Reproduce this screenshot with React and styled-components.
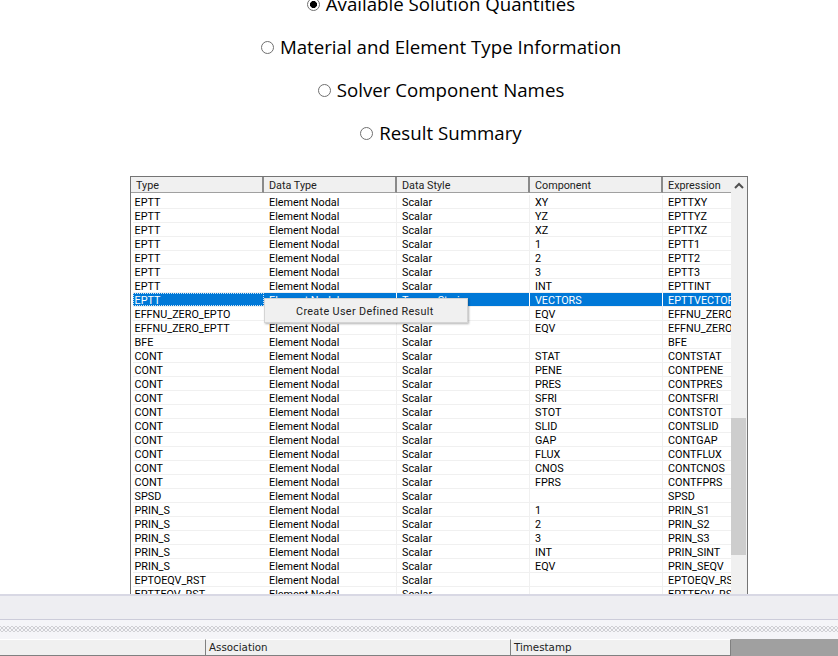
import React from "react";
import styled, { createGlobalStyle } from "styled-components";

const GlobalStyle = createGlobalStyle`
  html, body {
    margin: 0;
    padding: 0;
    background: #ffffff;
  }
`;

const Page = styled.div`
  width: 838px;
  height: 656px;
  overflow: hidden;
  display: flex;
  flex-direction: column;
`;

const Options = styled.div`
  flex: none;
  height: 176px;
  padding-left: 44px;
  box-sizing: border-box;
`;

const OptionList = styled.div`
  margin-top: -18px;
  display: flex;
  flex-direction: column;
  align-items: center;
`;

const Option = styled.label`
  height: 43px;
  display: flex;
  align-items: center;
  gap: 6px;
  font-family: "Open Sans", sans-serif;
  font-size: 18.7px;
  color: #000;
`;

const Radio = styled.input`
  appearance: none;
  margin: 2px 0 0;
  width: 13px;
  height: 13px;
  box-sizing: border-box;
  border: 1px solid #707070;
  border-radius: 50%;
  background: radial-gradient(circle, ${(p) => (p.defaultChecked ? "#000 3.2px" : "#fff 3.2px")}, #fff 3.8px);
`;

const TableFrame = styled.div`
  flex: none;
  position: relative;
  width: 618px;
  height: 418px;
  margin-left: 130px;
  box-sizing: border-box;
  border: 1px solid #747474;
  border-bottom: none;
  display: flex;
  overflow: hidden;
  font-family: "Roboto", sans-serif;
  font-size: 10.8px;
  color: #000;
`;

const TableBody = styled.div`
  width: 600px;
  flex: none;
  overflow: hidden;
`;

const HeadRow = styled.div`
  display: grid;
  grid-template-columns: 133px 133px 133px 133px 68px;
  height: 16px;
  margin-bottom: 2px;
`;

const HeadCell = styled.div`
  background: #f0f0f0;
  border-right: 2px solid #8a8a8a;
  border-bottom: 1px solid #a0a0a0;
  box-sizing: border-box;
  padding: 1px 0 0 5px;
  line-height: 15px;
  white-space: nowrap;
  overflow: hidden;
  color: #222;
  &:last-child {
    border-right: none;
  }
`;

const Row = styled.div`
  display: grid;
  grid-template-columns: 131px 133px 133px 133px 68px;
  margin-left: 2px;
  height: 14px;
  box-sizing: border-box;
  border-bottom: 1px solid #f0f0f0;
  background: ${(p) => (p.$selected ? "#0078d7" : "#fff")};
  color: ${(p) => (p.$selected ? "#fff" : "#000")};
`;

const Cell = styled.div`
  padding: 1px 0 0 5px;
  line-height: 13px;
  height: 13px;
  white-space: nowrap;
  overflow: hidden;
  box-sizing: border-box;
  border-right: 1px solid ${(p) => (p.$selected ? "#fff" : "#f0f0f0")};
  &:first-child {
    padding-left: 1.5px;
    outline: ${(p) => (p.$selected ? "1px dotted #cfe6f8" : "none")};
    outline-offset: -1px;
    border-right: none;
  }
  &:last-child {
    border-right: none;
  }
`;

const ScrollBar = styled.div`
  flex: none;
  width: 16px;
  background: #f0f0f0;
  position: relative;
`;

const ScrollUp = styled.svg`
  display: block;
  margin: 5px auto 0;
`;

const ScrollThumb = styled.div`
  position: absolute;
  left: 0;
  right: 1px;
  top: 241px;
  height: 137px;
  background: #cdcdcd;
`;

const ContextMenu = styled.div`
  position: absolute;
  left: 133px;
  top: 121px;
  width: 204px;
  height: 25px;
  background: #f0f0f0;
  border: 1px solid #d4d4d4;
  box-sizing: border-box;
  box-shadow: 1px 1px 2px rgba(0, 0, 0, 0.3);
  padding: 1px 0 0 31px;
  line-height: 24px;
  letter-spacing: 0.35px;
  color: #222;
  font-size: 10.8px;
  white-space: nowrap;
`;

const BottomPanel = styled.div`
  flex: 1;
  display: flex;
  flex-direction: column;
  border-top: 2px solid #d8d8e4;
  background: #eeeef2;
`;

const PanelFill = styled.div`
  height: 23px;
  flex: none;
  border-bottom: 1px solid #ccccda;
`;

const Grip = styled.div`
  height: 19px;
  flex: none;
  box-sizing: border-box;
  padding-top: 6px;
  background: #f5f5f8;
`;

const GripDots = styled.div`
  height: 6px;
  background-image: radial-gradient(#d0d0d4 0.8px, transparent 0.9px),
    radial-gradient(#d0d0d4 0.8px, transparent 0.9px);
  background-size: 4px 4px;
  background-position: 0 0, 2px 2px;
`;

const StatusRow = styled.div`
  flex: 1;
  display: grid;
  grid-template-columns: 206px 305px 220px 107px;
  font-family: "DejaVu Sans", sans-serif;
  font-size: 10.3px;
  color: #222;
  background: #f0f0f0;
`;

const StatusCell = styled.div`
  height: 15px;
  background: #f0f0f0;
  border-top: 1px solid #fff;
  border-right: 1px solid #808080;
  border-bottom: 1px solid #808080;
  padding-left: 3px;
  line-height: 14px;
  &:last-child {
    height: auto;
    background: #a0a0a0;
    border: none;
  }
`;

const rows = [
  ["EPTT", "Element Nodal", "Scalar", "XY", "EPTTXY"],
  ["EPTT", "Element Nodal", "Scalar", "YZ", "EPTTYZ"],
  ["EPTT", "Element Nodal", "Scalar", "XZ", "EPTTXZ"],
  ["EPTT", "Element Nodal", "Scalar", "1", "EPTT1"],
  ["EPTT", "Element Nodal", "Scalar", "2", "EPTT2"],
  ["EPTT", "Element Nodal", "Scalar", "3", "EPTT3"],
  ["EPTT", "Element Nodal", "Scalar", "INT", "EPTTINT"],
  ["EPTT", "Element Nodal", "Tensor Strain", "VECTORS", "EPTTVECTORS"],
  ["EFFNU_ZERO_EPTO", "Element Nodal", "Scalar", "EQV", "EFFNU_ZERO_EPTO"],
  ["EFFNU_ZERO_EPTT", "Element Nodal", "Scalar", "EQV", "EFFNU_ZERO_EPTT"],
  ["BFE", "Element Nodal", "Scalar", "", "BFE"],
  ["CONT", "Element Nodal", "Scalar", "STAT", "CONTSTAT"],
  ["CONT", "Element Nodal", "Scalar", "PENE", "CONTPENE"],
  ["CONT", "Element Nodal", "Scalar", "PRES", "CONTPRES"],
  ["CONT", "Element Nodal", "Scalar", "SFRI", "CONTSFRI"],
  ["CONT", "Element Nodal", "Scalar", "STOT", "CONTSTOT"],
  ["CONT", "Element Nodal", "Scalar", "SLID", "CONTSLID"],
  ["CONT", "Element Nodal", "Scalar", "GAP", "CONTGAP"],
  ["CONT", "Element Nodal", "Scalar", "FLUX", "CONTFLUX"],
  ["CONT", "Element Nodal", "Scalar", "CNOS", "CONTCNOS"],
  ["CONT", "Element Nodal", "Scalar", "FPRS", "CONTFPRS"],
  ["SPSD", "Element Nodal", "Scalar", "", "SPSD"],
  ["PRIN_S", "Element Nodal", "Scalar", "1", "PRIN_S1"],
  ["PRIN_S", "Element Nodal", "Scalar", "2", "PRIN_S2"],
  ["PRIN_S", "Element Nodal", "Scalar", "3", "PRIN_S3"],
  ["PRIN_S", "Element Nodal", "Scalar", "INT", "PRIN_SINT"],
  ["PRIN_S", "Element Nodal", "Scalar", "EQV", "PRIN_SEQV"],
  ["EPTOEQV_RST", "Element Nodal", "Scalar", "", "EPTOEQV_RST"],
  ["EPTTEQV_RST", "Element Nodal", "Scalar", "", "EPTTEQV_RST"],
];

const options = [
  "Available Solution Quantities",
  "Material and Element Type Information",
  "Solver Component Names",
  "Result Summary",
];

const headers = ["Type", "Data Type", "Data Style", "Component", "Expression"];

export default function App() {
  return (
    <Page>
      <GlobalStyle />
      <Options>
        <OptionList>
          {options.map((o, i) => (
            <Option key={o}>
              <Radio type="radio" name="view" defaultChecked={i === 0} />
              {o}
            </Option>
          ))}
        </OptionList>
      </Options>
      <TableFrame>
        <TableBody>
          <HeadRow>
            {headers.map((h) => (
              <HeadCell key={h}>{h}</HeadCell>
            ))}
          </HeadRow>
          {rows.map((r, i) => (
            <Row key={i} $selected={i === 7}>
              {r.map((c, j) => (
                <Cell key={j} $selected={i === 7}>
                  {c}
                </Cell>
              ))}
            </Row>
          ))}
        </TableBody>
        <ScrollBar>
          <ScrollUp width="10" height="8" viewBox="0 0 10 8">
            <path d="M1 6 L5 2 L9 6" fill="none" stroke="#505050" strokeWidth="2" />
          </ScrollUp>
          <ScrollThumb />
        </ScrollBar>
        <ContextMenu>Create User Defined Result</ContextMenu>
      </TableFrame>
      <BottomPanel>
        <PanelFill />
        <Grip>
          <GripDots />
        </Grip>
        <StatusRow>
          <StatusCell />
          <StatusCell>Association</StatusCell>
          <StatusCell>Timestamp</StatusCell>
          <StatusCell />
        </StatusRow>
      </BottomPanel>
    </Page>
  );
}
